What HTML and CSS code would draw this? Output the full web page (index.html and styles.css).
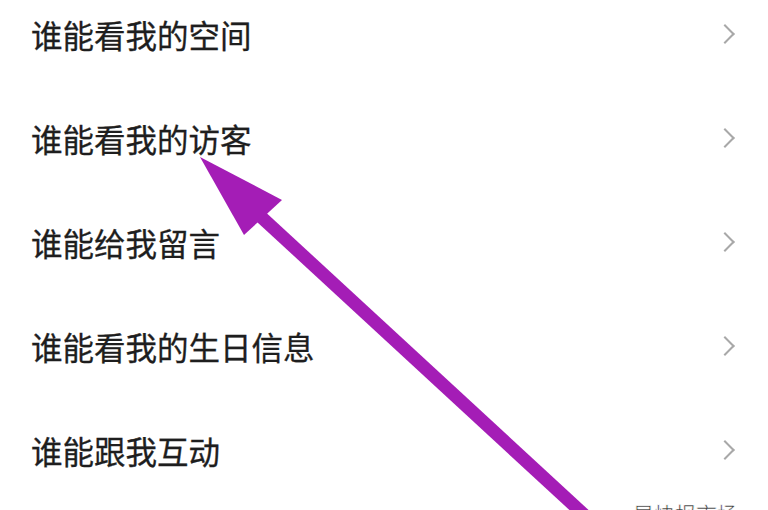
FILE: index.html
```html
<!DOCTYPE html>
<html lang="zh-CN">
<head>
    <meta charset="UTF-8">
    <title>隐私设置</title>
    <link rel="stylesheet" href="styles.css">
</head>
<body>
    <div class="page">
        <ul class="menu">
            <li class="menu-item"><span class="label">谁能看我的空间</span><span class="chev"></span></li>
            <li class="menu-item"><span class="label">谁能看我的访客</span><span class="chev"></span></li>
            <li class="menu-item"><span class="label">谁能给我留言</span><span class="chev"></span></li>
            <li class="menu-item"><span class="label">谁能看我的生日信息</span><span class="chev"></span></li>
            <li class="menu-item"><span class="label">谁能跟我互动</span><span class="chev"></span></li>
        </ul>

        <!-- annotation arrow -->
        <svg class="pointer" width="768" height="510" viewBox="0 0 768 510">
            <line x1="258" y1="214" x2="592" y2="522" stroke="#a41db6" stroke-width="13"/>
            <polygon points="200,157 282,200 244,235" fill="#a41db6"/>
        </svg>

        <div class="watermark">早快报市场</div>
    </div>
</body>
</html>
```

FILE: styles.css
```css
body {
    margin: 0;
    padding: 0;
    background: #fff;
    font-family: "Noto Sans CJK SC", "Noto Sans", sans-serif;
    overflow: hidden;
}

.page {
    position: relative;
    width: 768px;
    height: 510px;
    overflow: hidden;
}

/* list rows */
.menu {
    list-style: none;
    margin: -18px 0 0 0;
    padding: 0;
}

.menu-item {
    height: 104px;
    display: flex;
    align-items: center;
    justify-content: space-between;
    padding: 0 34px 0 31px;
}

.label {
    font-size: 31.5px;
    color: #1e1e1e;
    -webkit-text-stroke: 0.3px #1e1e1e;
}

.chev {
    width: 12px;
    height: 12px;
    border-top: 2px solid #a8a8a8;
    border-right: 2px solid #a8a8a8;
    transform: rotate(45deg);
    margin-right: 2px;
}

/* annotation overlay */
.pointer {
    position: absolute;
    top: 0;
    left: 0;
    pointer-events: none;
}

.watermark {
    position: absolute;
    left: 633px;
    top: 498px;
    font-size: 21px;
    color: #333;
    -webkit-text-stroke: 0.6px #fff;
}
```
